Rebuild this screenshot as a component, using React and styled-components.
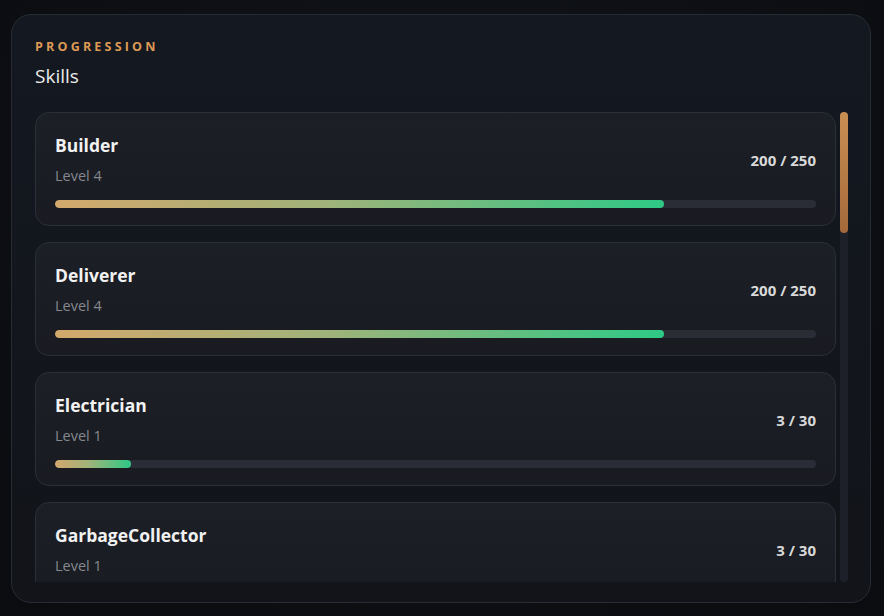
import React from 'react';
import styled, { createGlobalStyle } from 'styled-components';

const GlobalStyle = createGlobalStyle`
  html, body {
    margin: 0;
    padding: 0;
    background: #0c0e12;
  }
  body {
    font-family: 'Open Sans', 'Noto Sans', sans-serif;
  }
`;

const skills = [
  { name: 'Builder', level: 4, xp: 200, max: 250 },
  { name: 'Deliverer', level: 4, xp: 200, max: 250 },
  { name: 'Electrician', level: 1, xp: 3, max: 30 },
  { name: 'GarbageCollector', level: 1, xp: 3, max: 30 },
  { name: 'Mechanic', level: 2, xp: 40, max: 80 },
  { name: 'Miner', level: 1, xp: 12, max: 30 },
  { name: 'Pilot', level: 1, xp: 0, max: 30 },
  { name: 'Farmer', level: 3, xp: 90, max: 150 },
  { name: 'Fisher', level: 1, xp: 8, max: 30 },
  { name: 'Hunter', level: 2, xp: 20, max: 80 },
  { name: 'Medic', level: 1, xp: 5, max: 30 },
  { name: 'Trucker', level: 2, xp: 60, max: 80 },
  { name: 'Taxi', level: 1, xp: 14, max: 30 },
  { name: 'Lumberjack', level: 1, xp: 2, max: 30 },
];

// --- STYLED COMPONENTS ---

const Page = styled.div`
  padding: 14px 13px 13px 11px;
  height: 616px;
  box-sizing: border-box;
  background: radial-gradient(circle at 50% 30%, #101318 0%, #0b0c10 100%);
`;

const Panel = styled.section`
  height: 589px;
  box-sizing: border-box;
  display: flex;
  flex-direction: column;
  padding: 24px 22px 20px 23px;
  border: 1px solid #272b33;
  border-radius: 20px;
  background: linear-gradient(180deg, #141821 0%, #121419 100%);
`;

const Eyebrow = styled.div`
  font-size: 12.5px;
  font-weight: 700;
  letter-spacing: 3.2px;
  line-height: 16px;
  color: #dc9a55;
  text-transform: uppercase;
`;

const Title = styled.h2`
  margin: 9px 0 0 0;
  font-size: 19px;
  font-weight: 400;
  line-height: 24px;
  color: #ececec;
`;

const ListArea = styled.div`
  margin-top: 24px;
  flex: 1;
  min-height: 0;
  display: flex;
  gap: 4px;
`;

const SkillList = styled.div`
  flex: 1;
  min-width: 0;
  overflow: hidden;
  display: flex;
  flex-direction: column;
  gap: 16px;
`;

const ScrollTrack = styled.div`
  width: 8px;
  flex-shrink: 0;
  border-radius: 4px;
  background: #1d2028;
`;

const ScrollThumb = styled.div`
  height: 121px;
  border-radius: 4px;
  background: linear-gradient(180deg, #c98f52 0%, #a4693a 100%);
`;

const SkillCard = styled.div`
  flex-shrink: 0;
  padding: 21px 19px 17px 19px;
  border: 1px solid #2b2f37;
  border-radius: 14px;
  background: linear-gradient(180deg, #1c1f26 0%, #191b21 100%);
`;

const CardHeader = styled.div`
  display: flex;
  justify-content: space-between;
  align-items: center;
`;

const SkillName = styled.div`
  font-size: 17.5px;
  font-weight: 700;
  line-height: 22px;
  color: #f2f2f2;
`;

const SkillLevel = styled.div`
  margin-top: 10px;
  font-size: 14.5px;
  line-height: 20px;
  color: #85888e;
`;

const SkillValue = styled.div`
  font-size: 15px;
  font-weight: 700;
  color: #d9d9d9;
`;

const Track = styled.div`
  margin-top: 14px;
  height: 8px;
  border-radius: 4px;
  background: #2a2d35;
  overflow: hidden;
`;

const Fill = styled.div`
  height: 100%;
  border-radius: 4px;
  background: linear-gradient(90deg, #d3a86c 0%, #9fb37a 45%, #2ec986 100%);
`;

const App = () => {
  return (
    <>
      <GlobalStyle />
      <Page>
        <Panel>
          <Eyebrow>Progression</Eyebrow>
          <Title>Skills</Title>
          <ListArea>
            <SkillList>
              {skills.map((s) => (
                <SkillCard key={s.name}>
                  <CardHeader>
                    <div>
                      <SkillName>{s.name}</SkillName>
                      <SkillLevel>Level {s.level}</SkillLevel>
                    </div>
                    <SkillValue>
                      {s.xp} / {s.max}
                    </SkillValue>
                  </CardHeader>
                  <Track>
                    <Fill style={{ width: `${(s.xp / s.max) * 100}%` }} />
                  </Track>
                </SkillCard>
              ))}
            </SkillList>
            <ScrollTrack>
              <ScrollThumb />
            </ScrollTrack>
          </ListArea>
        </Panel>
      </Page>
    </>
  );
};

export default App;
